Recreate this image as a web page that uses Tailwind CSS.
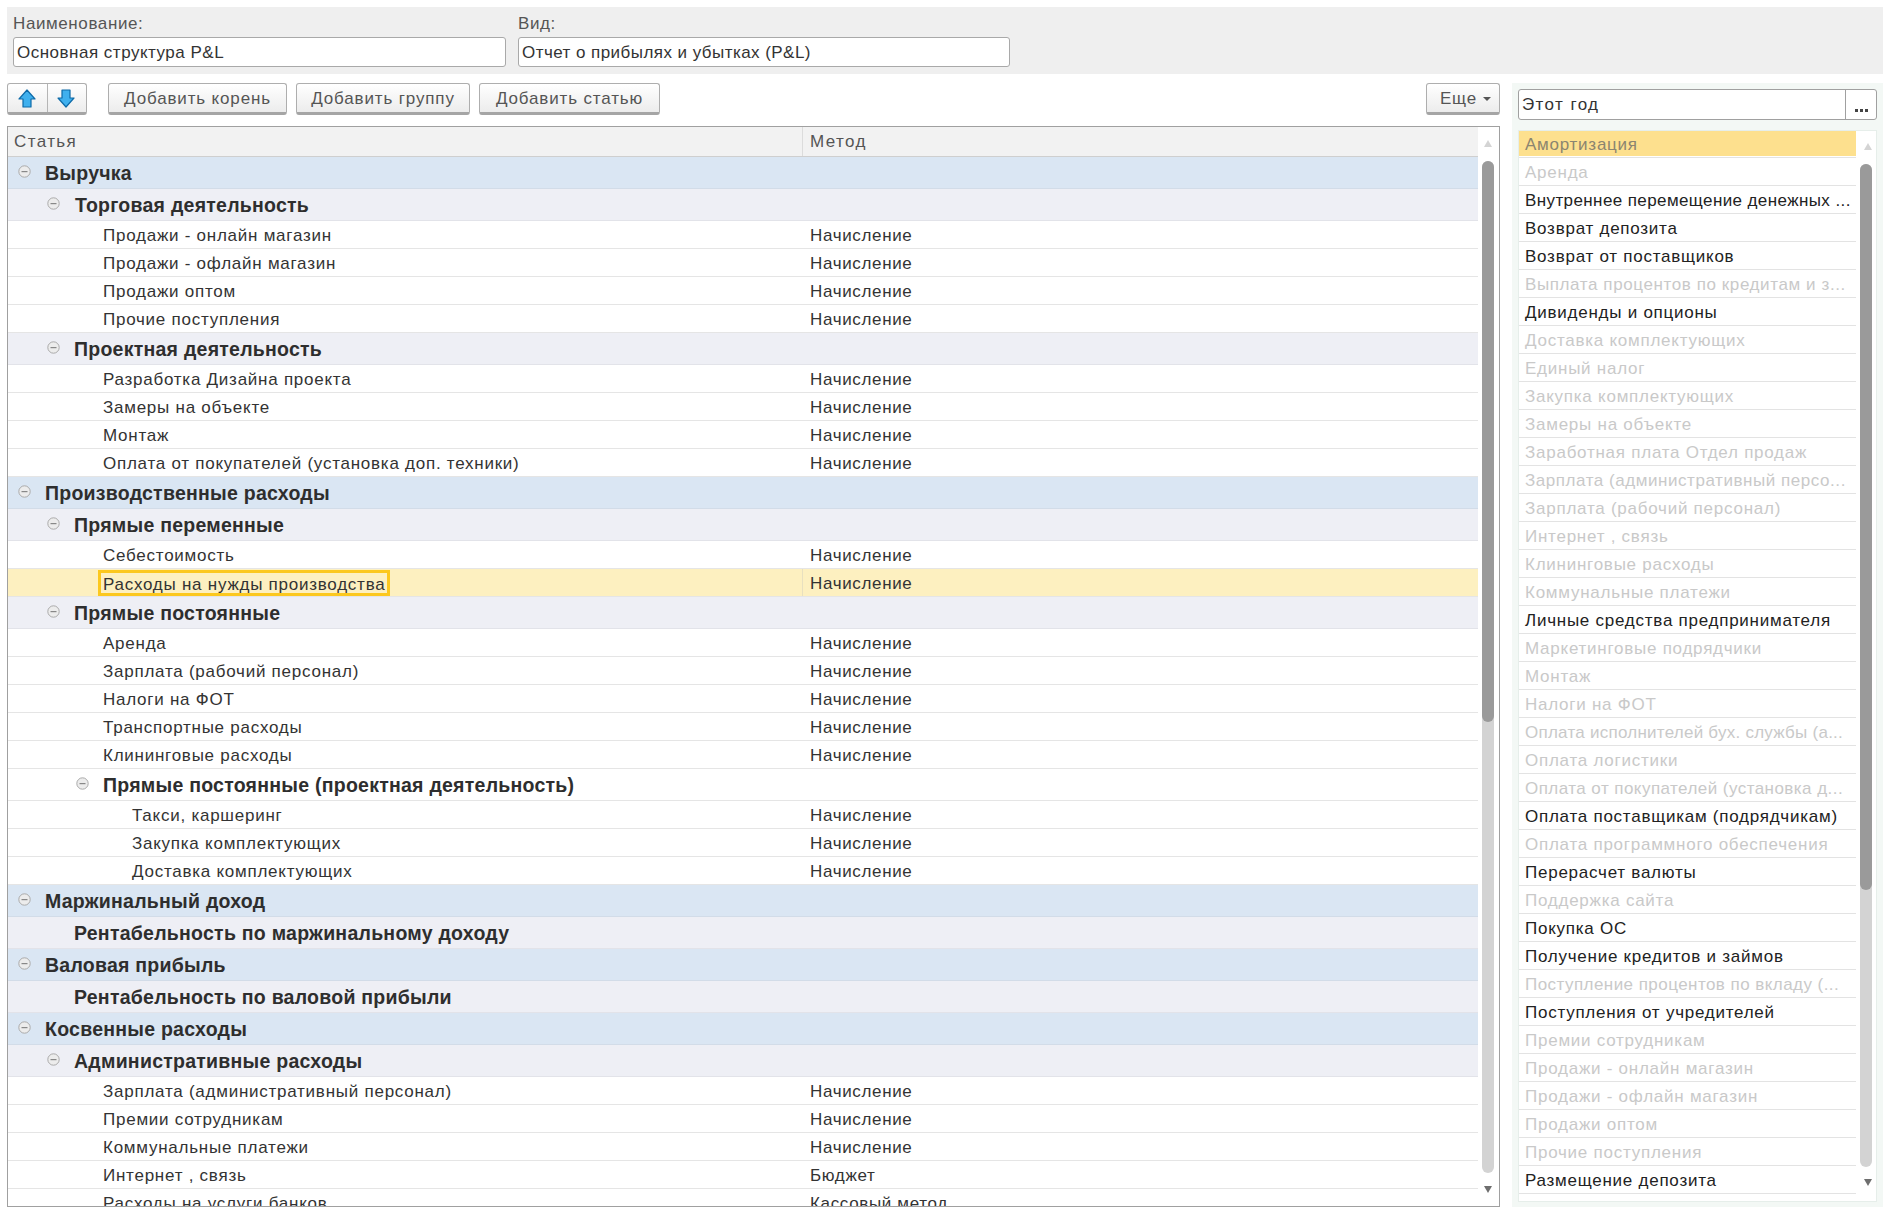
<!DOCTYPE html>
<html lang="ru"><head><meta charset="utf-8"><script src="https://cdn.jsdelivr.net/npm/@tailwindcss/browser@4"></script></head>
<body class="bg-white font-['Liberation_Sans',Arial,sans-serif] text-[#333]">
<div class="w-[1888px] h-[1218px] overflow-hidden pt-[7px] pl-[7px] pr-[5px]">
<div class="h-[67px] bg-[#efefef] flex gap-[12px] pl-[6px] pt-[7px]">
  <div class="w-[493px]"><div class="h-[23px] text-[17px] tracking-[0.6px] leading-[19px] text-[#555]">Наименование:</div><div class="h-[30px] bg-white border border-[#a9a9a9] rounded-[3px] pl-[3px] text-[17px] tracking-[0.5px] leading-[29px] text-[#333]">Основная структура P&amp;L</div></div>
  <div class="w-[492px]"><div class="h-[23px] text-[17px] tracking-[0.6px] leading-[19px] text-[#555]">Вид:</div><div class="h-[30px] bg-white border border-[#a9a9a9] rounded-[3px] pl-[3px] text-[17px] tracking-[0.45px] leading-[29px] text-[#333]">Отчет о прибылях и убытках (P&amp;L)</div></div>
</div>
<div class="flex gap-[12px] mt-[9px]">
  <div class="w-[1493px]">
    <div class="h-[32px] flex items-start text-[17px] tracking-[0.85px] text-[#555]">
      <div class="flex w-[80px] h-[32px] border border-[#aeaeae] border-b-[3px] border-b-[#a5a5a5] rounded-[3px] bg-gradient-to-b from-white to-[#ececec]">
        <div class="w-[40px] border-r border-[#b5b5b5] flex items-center justify-center pr-[2px]"><svg width="18" height="19" viewBox="0 0 18 19"><path d="M9 1 L17 10 H13 V18 H5 V10 H1 Z" fill="#3fb0ee" stroke="#0d6aa8" stroke-width="1.2" stroke-linejoin="round"/></svg></div>
        <div class="flex-1 flex items-center justify-center pr-[2px]"><svg width="18" height="19" viewBox="0 0 18 19"><path d="M9 18 L17 9 H13 V1 H5 V9 H1 Z" fill="#3fb0ee" stroke="#0d6aa8" stroke-width="1.2" stroke-linejoin="round"/></svg></div>
      </div>
      <div class="ml-[21px] w-[179px] h-[32px] pt-[2px] border border-[#aeaeae] border-b-[3px] border-b-[#a5a5a5] rounded-[3px] bg-gradient-to-b from-white to-[#ececec] flex items-center justify-center">Добавить корень</div>
      <div class="ml-[9px] w-[174px] h-[32px] pt-[2px] border border-[#aeaeae] border-b-[3px] border-b-[#a5a5a5] rounded-[3px] bg-gradient-to-b from-white to-[#ececec] flex items-center justify-center">Добавить группу</div>
      <div class="ml-[9px] w-[181px] h-[32px] pt-[2px] border border-[#aeaeae] border-b-[3px] border-b-[#a5a5a5] rounded-[3px] bg-gradient-to-b from-white to-[#ececec] flex items-center justify-center">Добавить статью</div>
      <div class="ml-auto w-[74px] h-[32px] pt-[2px] pl-[5px] border border-[#aeaeae] border-b-[3px] border-b-[#a5a5a5] rounded-[3px] bg-gradient-to-b from-white to-[#ececec] flex items-center justify-center gap-[6px]">Еще<span class="w-0 h-0 border-x-[4px] border-x-transparent border-t-[4px] border-t-[#555]"></span></div>
    </div>
    <div class="relative mt-[11px] h-[1081px] border border-[#a0a0a0] overflow-hidden">
      <div class="w-[1470px] text-[17px] tracking-[0.75px]">
        <div class="h-[30px] flex bg-[#f2f2f2] border-b border-[#cfcfcf] text-[#555] tracking-[1.4px] leading-[29px]"><div class="w-[795px] pl-[6px] border-r border-[#dcdcdc]">Статья</div><div class="pl-[7px]">Метод</div></div>

        <div class="h-[32px] pt-[2px] flex items-center pl-[10px] bg-[#dae6f3] border-b border-[#d2dce8] font-bold text-[19.5px] tracking-[0.25px] text-[#2e2e2e]"><svg class="-mt-[5px] mr-[14px]" width="13" height="13" viewBox="0 0 13 13"><circle cx="6.5" cy="6.5" r="5.7" fill="#ececec" stroke="#aaa"/><rect x="3.5" y="6" width="6" height="1.2" fill="#888"/></svg>Выручка</div>
        <div class="h-[32px] pt-[2px] flex items-center pl-[39px] bg-[#eeeff5] border-b border-[#e2e3e9] font-bold text-[19.5px] tracking-[0.25px] text-[#2e2e2e]"><svg class="-mt-[5px] mr-[15px]" width="13" height="13" viewBox="0 0 13 13"><circle cx="6.5" cy="6.5" r="5.7" fill="#ececec" stroke="#aaa"/><rect x="3.5" y="6" width="6" height="1.2" fill="#888"/></svg>Торговая деятельность</div>
        <div class="h-[28px] pt-[2px] flex items-center border-b border-[#e5e5e5]"><div class="w-[795px] pl-[95px]">Продажи - онлайн магазин</div><div class="pl-[7px] tracking-[0.65px]">Начисление</div></div>
        <div class="h-[28px] pt-[2px] flex items-center border-b border-[#e5e5e5]"><div class="w-[795px] pl-[95px]">Продажи - офлайн магазин</div><div class="pl-[7px] tracking-[0.65px]">Начисление</div></div>
        <div class="h-[28px] pt-[2px] flex items-center border-b border-[#e5e5e5]"><div class="w-[795px] pl-[95px]">Продажи оптом</div><div class="pl-[7px] tracking-[0.65px]">Начисление</div></div>
        <div class="h-[28px] pt-[2px] flex items-center border-b border-[#e5e5e5]"><div class="w-[795px] pl-[95px]">Прочие поступления</div><div class="pl-[7px] tracking-[0.65px]">Начисление</div></div>
        <div class="h-[32px] pt-[2px] flex items-center pl-[39px] bg-[#eeeff5] border-b border-[#e2e3e9] font-bold text-[19.5px] tracking-[0.25px] text-[#2e2e2e]"><svg class="-mt-[5px] mr-[14px]" width="13" height="13" viewBox="0 0 13 13"><circle cx="6.5" cy="6.5" r="5.7" fill="#ececec" stroke="#aaa"/><rect x="3.5" y="6" width="6" height="1.2" fill="#888"/></svg>Проектная деятельность</div>
        <div class="h-[28px] pt-[2px] flex items-center border-b border-[#e5e5e5]"><div class="w-[795px] pl-[95px]">Разработка Дизайна проекта</div><div class="pl-[7px] tracking-[0.65px]">Начисление</div></div>
        <div class="h-[28px] pt-[2px] flex items-center border-b border-[#e5e5e5]"><div class="w-[795px] pl-[95px]">Замеры на объекте</div><div class="pl-[7px] tracking-[0.65px]">Начисление</div></div>
        <div class="h-[28px] pt-[2px] flex items-center border-b border-[#e5e5e5]"><div class="w-[795px] pl-[95px]">Монтаж</div><div class="pl-[7px] tracking-[0.65px]">Начисление</div></div>
        <div class="h-[28px] pt-[2px] flex items-center border-b border-[#e5e5e5]"><div class="w-[795px] pl-[95px]">Оплата от покупателей (установка доп. техники)</div><div class="pl-[7px] tracking-[0.65px]">Начисление</div></div>
        <div class="h-[32px] pt-[2px] flex items-center pl-[10px] bg-[#dae6f3] border-b border-[#d2dce8] font-bold text-[19.5px] tracking-[0.25px] text-[#2e2e2e]"><svg class="-mt-[5px] mr-[14px]" width="13" height="13" viewBox="0 0 13 13"><circle cx="6.5" cy="6.5" r="5.7" fill="#ececec" stroke="#aaa"/><rect x="3.5" y="6" width="6" height="1.2" fill="#888"/></svg>Производственные расходы</div>
        <div class="h-[32px] pt-[2px] flex items-center pl-[39px] bg-[#eeeff5] border-b border-[#e2e3e9] font-bold text-[19.5px] tracking-[0.25px] text-[#2e2e2e]"><svg class="-mt-[5px] mr-[14px]" width="13" height="13" viewBox="0 0 13 13"><circle cx="6.5" cy="6.5" r="5.7" fill="#ececec" stroke="#aaa"/><rect x="3.5" y="6" width="6" height="1.2" fill="#888"/></svg>Прямые переменные</div>
        <div class="h-[28px] pt-[2px] flex items-center border-b border-[#e5e5e5]"><div class="w-[795px] pl-[95px]">Себестоимость</div><div class="pl-[7px] tracking-[0.65px]">Начисление</div></div>
        <div class="h-[28px] flex items-center bg-[#fdf0c0] border-b border-[#e5e5e5]"><div class="w-[795px] h-full pl-[90px] flex items-center border-r border-[#e8e0c0]"><span class="h-[26px] mt-[1px] pl-[2px] pr-[2px] leading-[23px] border-[3px] border-[#fcc81e]">Расходы на нужды производства</span></div><div class="pl-[7px] pt-[2px] tracking-[0.65px]">Начисление</div></div>
        <div class="h-[32px] pt-[2px] flex items-center pl-[39px] bg-[#eeeff5] border-b border-[#e2e3e9] font-bold text-[19.5px] tracking-[0.25px] text-[#2e2e2e]"><svg class="-mt-[5px] mr-[14px]" width="13" height="13" viewBox="0 0 13 13"><circle cx="6.5" cy="6.5" r="5.7" fill="#ececec" stroke="#aaa"/><rect x="3.5" y="6" width="6" height="1.2" fill="#888"/></svg>Прямые постоянные</div>
        <div class="h-[28px] pt-[2px] flex items-center border-b border-[#e5e5e5]"><div class="w-[795px] pl-[95px]">Аренда</div><div class="pl-[7px] tracking-[0.65px]">Начисление</div></div>
        <div class="h-[28px] pt-[2px] flex items-center border-b border-[#e5e5e5]"><div class="w-[795px] pl-[95px]">Зарплата (рабочий персонал)</div><div class="pl-[7px] tracking-[0.65px]">Начисление</div></div>
        <div class="h-[28px] pt-[2px] flex items-center border-b border-[#e5e5e5]"><div class="w-[795px] pl-[95px]">Налоги на ФОТ</div><div class="pl-[7px] tracking-[0.65px]">Начисление</div></div>
        <div class="h-[28px] pt-[2px] flex items-center border-b border-[#e5e5e5]"><div class="w-[795px] pl-[95px]">Транспортные расходы</div><div class="pl-[7px] tracking-[0.65px]">Начисление</div></div>
        <div class="h-[28px] pt-[2px] flex items-center border-b border-[#e5e5e5]"><div class="w-[795px] pl-[95px]">Клининговые расходы</div><div class="pl-[7px] tracking-[0.65px]">Начисление</div></div>
        <div class="h-[32px] pt-[2px] flex items-center pl-[68px] border-b border-[#e5e5e5] font-bold text-[19.5px] tracking-[0.25px] text-[#2e2e2e]"><svg class="-mt-[5px] mr-[14px]" width="13" height="13" viewBox="0 0 13 13"><circle cx="6.5" cy="6.5" r="5.7" fill="#ececec" stroke="#aaa"/><rect x="3.5" y="6" width="6" height="1.2" fill="#888"/></svg>Прямые постоянные (проектная деятельность)</div>
        <div class="h-[28px] pt-[2px] flex items-center border-b border-[#e5e5e5]"><div class="w-[795px] pl-[124px]">Такси, каршеринг</div><div class="pl-[7px] tracking-[0.65px]">Начисление</div></div>
        <div class="h-[28px] pt-[2px] flex items-center border-b border-[#e5e5e5]"><div class="w-[795px] pl-[124px]">Закупка комплектующих</div><div class="pl-[7px] tracking-[0.65px]">Начисление</div></div>
        <div class="h-[28px] pt-[2px] flex items-center border-b border-[#e5e5e5]"><div class="w-[795px] pl-[124px]">Доставка комплектующих</div><div class="pl-[7px] tracking-[0.65px]">Начисление</div></div>
        <div class="h-[32px] pt-[2px] flex items-center pl-[10px] bg-[#dae6f3] border-b border-[#d2dce8] font-bold text-[19.5px] tracking-[0.25px] text-[#2e2e2e]"><svg class="-mt-[5px] mr-[14px]" width="13" height="13" viewBox="0 0 13 13"><circle cx="6.5" cy="6.5" r="5.7" fill="#ececec" stroke="#aaa"/><rect x="3.5" y="6" width="6" height="1.2" fill="#888"/></svg>Маржинальный доход</div>
        <div class="h-[32px] pt-[2px] flex items-center pl-[66px] bg-[#eeeff5] border-b border-[#e2e3e9] font-bold text-[19.5px] tracking-[0.25px] text-[#2e2e2e]">Рентабельность по маржинальному доходу</div>
        <div class="h-[32px] pt-[2px] flex items-center pl-[10px] bg-[#dae6f3] border-b border-[#d2dce8] font-bold text-[19.5px] tracking-[0.25px] text-[#2e2e2e]"><svg class="-mt-[5px] mr-[14px]" width="13" height="13" viewBox="0 0 13 13"><circle cx="6.5" cy="6.5" r="5.7" fill="#ececec" stroke="#aaa"/><rect x="3.5" y="6" width="6" height="1.2" fill="#888"/></svg>Валовая прибыль</div>
        <div class="h-[32px] pt-[2px] flex items-center pl-[66px] bg-[#eeeff5] border-b border-[#e2e3e9] font-bold text-[19.5px] tracking-[0.25px] text-[#2e2e2e]">Рентабельность по валовой прибыли</div>
        <div class="h-[32px] pt-[2px] flex items-center pl-[10px] bg-[#dae6f3] border-b border-[#d2dce8] font-bold text-[19.5px] tracking-[0.25px] text-[#2e2e2e]"><svg class="-mt-[5px] mr-[14px]" width="13" height="13" viewBox="0 0 13 13"><circle cx="6.5" cy="6.5" r="5.7" fill="#ececec" stroke="#aaa"/><rect x="3.5" y="6" width="6" height="1.2" fill="#888"/></svg>Косвенные расходы</div>
        <div class="h-[32px] pt-[2px] flex items-center pl-[39px] bg-[#eeeff5] border-b border-[#e2e3e9] font-bold text-[19.5px] tracking-[0.25px] text-[#2e2e2e]"><svg class="-mt-[5px] mr-[14px]" width="13" height="13" viewBox="0 0 13 13"><circle cx="6.5" cy="6.5" r="5.7" fill="#ececec" stroke="#aaa"/><rect x="3.5" y="6" width="6" height="1.2" fill="#888"/></svg>Административные расходы</div>
        <div class="h-[28px] pt-[2px] flex items-center border-b border-[#e5e5e5]"><div class="w-[795px] pl-[95px]">Зарплата (административный персонал)</div><div class="pl-[7px] tracking-[0.65px]">Начисление</div></div>
        <div class="h-[28px] pt-[2px] flex items-center border-b border-[#e5e5e5]"><div class="w-[795px] pl-[95px]">Премии сотрудникам</div><div class="pl-[7px] tracking-[0.65px]">Начисление</div></div>
        <div class="h-[28px] pt-[2px] flex items-center border-b border-[#e5e5e5]"><div class="w-[795px] pl-[95px]">Коммунальные платежи</div><div class="pl-[7px] tracking-[0.65px]">Начисление</div></div>
        <div class="h-[28px] pt-[2px] flex items-center border-b border-[#e5e5e5]"><div class="w-[795px] pl-[95px]">Интернет , связь</div><div class="pl-[7px] tracking-[0.65px]">Бюджет</div></div>
        <div class="h-[28px] pt-[2px] flex items-center border-b border-[#e5e5e5]"><div class="w-[795px] pl-[95px]">Расходы на услуги банков</div><div class="pl-[7px] tracking-[0.65px]">Кассовый метод</div></div>
      </div>
      <div class="absolute right-[5px] top-0 bottom-0 w-[12px]">
        <span class="absolute left-[2px] top-[13px] w-0 h-0 border-x-[4px] border-x-transparent border-b-[7px] border-b-[#d4d4d4]"></span>
        <div class="absolute top-[34px] left-0 w-[12px] h-[1012px] bg-[#d3d3d3] rounded-[6px]"><div class="h-[561px] bg-[#9a9a9a] rounded-[6px]"></div></div>
        <span class="absolute left-[2px] top-[1059px] w-0 h-0 border-x-[4px] border-x-transparent border-t-[7px] border-t-[#6e6e6e]"></span>
      </div>
    </div>
  </div>
  <div class="w-[371px] h-[1124px] bg-[#f3f8f5] px-[6px] pt-[6px]">
    <div class="h-[31px] flex bg-white border border-[#a0a0a0] rounded-[3px] text-[17px]"><div class="flex-1 pl-[3px] leading-[29px] text-[#333] tracking-[1.4px]">Этот год</div><div class="w-[31px] border-l border-[#a0a0a0] flex items-end justify-center pb-[7px] gap-[2px]"><i class="w-[3px] h-[3px] bg-[#444]"></i><i class="w-[3px] h-[3px] bg-[#444]"></i><i class="w-[3px] h-[3px] bg-[#444]"></i></div></div>
    <div class="relative mt-[10px] h-[1072px] bg-white border border-[#e6eeea] overflow-hidden">
      <div class="w-[337px] text-[17px] tracking-[0.75px] whitespace-nowrap overflow-hidden text-[#c9c9c9]">
        <div class="h-[27px] border-b border-[#e3e3e3]"><div class="h-[25px] bg-[#fde08e] pl-[6px] leading-[27px] text-[#8b8570]">Амортизация</div></div>
        <div class="h-[28px] leading-[29px] pl-[6px] border-b border-[#e3e3e3]">Аренда</div>
        <div class="h-[28px] leading-[29px] pl-[6px] border-b border-[#e3e3e3] text-[#222] tracking-[0.4px]">Внутреннее перемещение денежных ...</div>
        <div class="h-[28px] leading-[29px] pl-[6px] border-b border-[#e3e3e3] text-[#222]">Возврат депозита</div>
        <div class="h-[28px] leading-[29px] pl-[6px] border-b border-[#e3e3e3] text-[#222]">Возврат от поставщиков</div>
        <div class="h-[28px] leading-[29px] pl-[6px] border-b border-[#e3e3e3] tracking-[0.6px]">Выплата процентов по кредитам и з...</div>
        <div class="h-[28px] leading-[29px] pl-[6px] border-b border-[#e3e3e3] text-[#222]">Дивиденды и опционы</div>
        <div class="h-[28px] leading-[29px] pl-[6px] border-b border-[#e3e3e3]">Доставка комплектующих</div>
        <div class="h-[28px] leading-[29px] pl-[6px] border-b border-[#e3e3e3]">Единый налог</div>
        <div class="h-[28px] leading-[29px] pl-[6px] border-b border-[#e3e3e3]">Закупка комплектующих</div>
        <div class="h-[28px] leading-[29px] pl-[6px] border-b border-[#e3e3e3]">Замеры на объекте</div>
        <div class="h-[28px] leading-[29px] pl-[6px] border-b border-[#e3e3e3]">Заработная плата Отдел продаж</div>
        <div class="h-[28px] leading-[29px] pl-[6px] border-b border-[#e3e3e3] tracking-[0.55px]">Зарплата (административный персо...</div>
        <div class="h-[28px] leading-[29px] pl-[6px] border-b border-[#e3e3e3]">Зарплата (рабочий персонал)</div>
        <div class="h-[28px] leading-[29px] pl-[6px] border-b border-[#e3e3e3]">Интернет , связь</div>
        <div class="h-[28px] leading-[29px] pl-[6px] border-b border-[#e3e3e3]">Клининговые расходы</div>
        <div class="h-[28px] leading-[29px] pl-[6px] border-b border-[#e3e3e3]">Коммунальные платежи</div>
        <div class="h-[28px] leading-[29px] pl-[6px] border-b border-[#e3e3e3] text-[#222]">Личные средства предпринимателя</div>
        <div class="h-[28px] leading-[29px] pl-[6px] border-b border-[#e3e3e3]">Маркетинговые подрядчики</div>
        <div class="h-[28px] leading-[29px] pl-[6px] border-b border-[#e3e3e3]">Монтаж</div>
        <div class="h-[28px] leading-[29px] pl-[6px] border-b border-[#e3e3e3]">Налоги на ФОТ</div>
        <div class="h-[28px] leading-[29px] pl-[6px] border-b border-[#e3e3e3] tracking-[0.25px]">Оплата исполнителей бух. службы (а...</div>
        <div class="h-[28px] leading-[29px] pl-[6px] border-b border-[#e3e3e3]">Оплата логистики</div>
        <div class="h-[28px] leading-[29px] pl-[6px] border-b border-[#e3e3e3] tracking-[0.45px]">Оплата от покупателей (установка д...</div>
        <div class="h-[28px] leading-[29px] pl-[6px] border-b border-[#e3e3e3] text-[#222]">Оплата поставщикам (подрядчикам)</div>
        <div class="h-[28px] leading-[29px] pl-[6px] border-b border-[#e3e3e3]">Оплата программного обеспечения</div>
        <div class="h-[28px] leading-[29px] pl-[6px] border-b border-[#e3e3e3] text-[#222]">Перерасчет валюты</div>
        <div class="h-[28px] leading-[29px] pl-[6px] border-b border-[#e3e3e3]">Поддержка сайта</div>
        <div class="h-[28px] leading-[29px] pl-[6px] border-b border-[#e3e3e3] text-[#222]">Покупка ОС</div>
        <div class="h-[28px] leading-[29px] pl-[6px] border-b border-[#e3e3e3] text-[#222]">Получение кредитов и займов</div>
        <div class="h-[28px] leading-[29px] pl-[6px] border-b border-[#e3e3e3] tracking-[0.45px]">Поступление процентов по вкладу (...</div>
        <div class="h-[28px] leading-[29px] pl-[6px] border-b border-[#e3e3e3] text-[#222]">Поступления от учредителей</div>
        <div class="h-[28px] leading-[29px] pl-[6px] border-b border-[#e3e3e3]">Премии сотрудникам</div>
        <div class="h-[28px] leading-[29px] pl-[6px] border-b border-[#e3e3e3]">Продажи - онлайн магазин</div>
        <div class="h-[28px] leading-[29px] pl-[6px] border-b border-[#e3e3e3]">Продажи - офлайн магазин</div>
        <div class="h-[28px] leading-[29px] pl-[6px] border-b border-[#e3e3e3]">Продажи оптом</div>
        <div class="h-[28px] leading-[29px] pl-[6px] border-b border-[#e3e3e3]">Прочие поступления</div>
        <div class="h-[28px] leading-[29px] pl-[6px] border-b border-[#e3e3e3] text-[#222]">Размещение депозита</div>
      </div>
      <span class="absolute left-[345px] top-[12px] w-0 h-0 border-x-[4px] border-x-transparent border-b-[7px] border-b-[#d4d4d4]"></span>
      <div class="absolute top-[33px] left-[341px] w-[12px] h-[1003px] bg-[#d3d3d3] rounded-[6px]"><div class="h-[726px] bg-[#9a9a9a] rounded-[6px]"></div></div>
      <span class="absolute left-[345px] top-[1048px] w-0 h-0 border-x-[4px] border-x-transparent border-t-[7px] border-t-[#6e6e6e]"></span>
    </div>
  </div>
</div>
</div>
</body></html>
